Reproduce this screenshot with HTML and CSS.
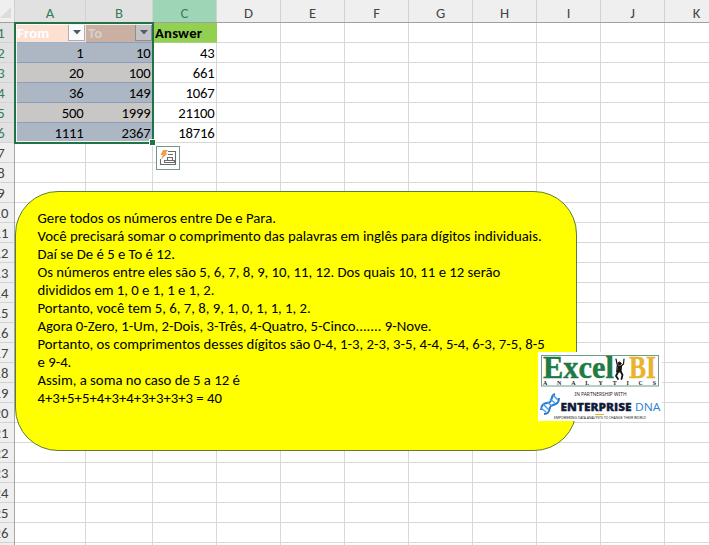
FILE: index.html
```html
<!DOCTYPE html>
<html lang="pt">
<head>
<meta charset="utf-8">
<title>Planilha</title>
<link rel="stylesheet" href="styles.css">
</head>
<body>
<div class="sheet">
  <div class="col-heads">
    <div class="corner"><svg width="15" height="22"><path d="M11 7v11H0z" fill="#dcdcdc"/></svg></div>
    <div class="ch ca sel">A</div><div class="ch cb sel">B</div><div class="ch cur">C</div><div class="ch">D</div><div class="ch">E</div><div class="ch">F</div><div class="ch">G</div><div class="ch">H</div><div class="ch">I</div><div class="ch">J</div><div class="ch">K</div>
  </div>
  <div class="main">
    <div class="row-heads">
      <div class="rh sel">1</div><div class="rh sel">2</div><div class="rh sel">3</div><div class="rh sel">4</div><div class="rh sel">5</div><div class="rh sel">6</div><div class="rh">7</div><div class="rh">8</div><div class="rh">9</div><div class="rh">10</div><div class="rh">11</div><div class="rh">12</div><div class="rh">13</div><div class="rh">14</div><div class="rh">15</div><div class="rh">16</div><div class="rh">17</div><div class="rh">18</div><div class="rh">19</div><div class="rh">20</div><div class="rh">21</div><div class="rh">22</div><div class="rh">23</div><div class="rh">24</div><div class="rh">25</div><div class="rh">26</div><div class="rh"></div>
    </div>
    <div class="cells">
      <div class="data">
        <div class="c head from">From<span class="filter"><svg width="9" height="5"><path d="M0 0h8L4 4.5z" fill="#555b63"/></svg></span></div>
        <div class="c head to">To<span class="filter dim"><svg width="9" height="5"><path d="M0 0h8L4 4.5z" fill="#555b63"/></svg></span></div>
        <div class="c head answer">Answer</div>
        <div class="c blue">1</div><div class="c blue">10</div><div class="c">43</div>
        <div class="c gray">20</div><div class="c gray">100</div><div class="c">661</div>
        <div class="c blue">36</div><div class="c blue">149</div><div class="c">1067</div>
        <div class="c gray">500</div><div class="c gray">1999</div><div class="c">21100</div>
        <div class="c blue">1111</div><div class="c blue">2367</div><div class="c">18716</div>
      </div>
    </div>
  </div>
  <div class="selection"></div>
  <div class="handle"></div>
  <div class="quick">
    <svg width="18" height="18" viewBox="0 0 18 18" fill="none">
      <path d="M9 2.500h7.500v13.500M1.500 10v5.500h15M9 5.500h5M8.500 11V8.500h5V11M5.500 11.500h10v2h-10z" stroke="#6b6b6b" stroke-width="1.100"/>
      <path d="M4 1h5L6.500 4.500H9L1.500 10.500 4 6H1.500z" fill="#f0a04c"/>
    </svg>
  </div>
  <div class="note">
    <p>Gere todos os números entre De e Para.</p>
    <p>Você precisará somar o comprimento das palavras em inglês para dígitos individuais.</p>
    <p>Daí se De é 5 e To é 12.</p>
    <p>Os números entre eles são 5, 6, 7, 8, 9, 10, 11, 12. Dos quais 10, 11 e 12 serão</p>
    <p>divididos em 1, 0 e 1, 1 e 1, 2.</p>
    <p>Portanto, você tem 5, 6, 7, 8, 9, 1, 0, 1, 1, 1, 2.</p>
    <p>Agora 0-Zero, 1-Um, 2-Dois, 3-Três, 4-Quatro, 5-Cinco....... 9-Nove.</p>
    <p>Portanto, os comprimentos desses dígitos são 0-4, 1-3, 2-3, 3-5, 4-4, 5-4, 6-3, 7-5, 8-5</p>
    <p>e 9-4.</p>
    <p>Assim, a soma no caso de 5 a 12 é</p>
    <p>4+3+5+5+4+3+4+3+3+3+3 = 40</p>
  </div>
  <svg class="logo" width="124" height="69" viewBox="0 0 124 69">
    <rect width="124" height="69" fill="#fff"/>
    <rect x="3.500" y="3.500" width="117" height="30.500" fill="none" stroke="#6f9d86"/>
    <g class="brand">
      <text x="5" y="26.300" textLength="71" lengthAdjust="spacingAndGlyphs" fill="#1f7a43" stroke="#1f7a43">Excel</text>
      <text x="91" y="26.300" textLength="27" lengthAdjust="spacingAndGlyphs" fill="#e9b32c" stroke="#e9b32c">BI</text>
    </g>
    <g fill="#151515" stroke="#151515" stroke-linecap="round" stroke-linejoin="round">
      <circle cx="81.500" cy="11.500" r="1.500"/>
      <path d="M78 7l1.500 7 2.500 1 3.500-3 .5-5" fill="none" stroke-width="1.200"/>
      <path d="M79.500 14h4l-.5 6h-4z"/>
      <path d="M80 20l-2 4 2 3M83 20l1.500 3-1 4" fill="none" stroke-width="1.800"/>
    </g>
    <text class="analytics" x="5" y="32.700" textLength="113">ANALYTICS</text>
    <text class="partner" x="36.500" y="43.800" textLength="52" lengthAdjust="spacingAndGlyphs">IN PARTNERSHIP WITH</text>
    <g fill="none" stroke="#2878c8" stroke-width="2">
      <path d="M3 58c0-8 6-6 9-8s0-6 5-8"/>
      <path d="M6 62c8-1 4-6 7-8s8-1 8-8"/>
      <path d="M3 56l5 4M5 52l6 6M9 50l5 4M12 47l5 4M15 43l5 5" stroke="#4d9cf0" stroke-width="1.500"/>
    </g>
    <text class="ent" x="22.500" y="59" textLength="71" lengthAdjust="spacingAndGlyphs">ENTERPRISE</text>
    <text class="dna" x="97" y="59" textLength="25.500" lengthAdjust="spacingAndGlyphs">DNA</text>
    <path d="M57 62.500h9" stroke="#e9b32c"/>
    <text class="tag" x="16" y="67.300" textLength="92" lengthAdjust="spacingAndGlyphs">EMPOWERING DATA ANALYSTS TO CHANGE THEIR WORLD</text>
  </svg>
</div>
</body>
</html>
```
FILE: styles.css
```css
* { box-sizing: border-box; }
body { margin: 0; background: #fff; }
.sheet {
  position: relative;
  width: 709px;
  height: 545px;
  overflow: hidden;
  font-family: Carlito, "Noto Sans", sans-serif;
  font-size: 14.67px;
  color: #000;
}
.col-heads { display: flex; height: 23px; background: #efefef; border-bottom: 1px solid #a0a0a0; }
.corner { flex: none; width: 15px; border-right: 1px solid #cfcfcf; }
.ch {
  flex: none;
  width: 64px;
  padding-top: 4px;
  line-height: 18px;
  text-align: center;
  color: #444;
  border-right: 1px solid #d2d2d2;
}
.ca { width: 71px; }
.cb { width: 67px; }
.ch.sel { background: #e1e1e1; color: #397b5b; }
.ch.cur { background: #9fd5b7; color: #397b5b; }
.main { display: flex; }
.row-heads { flex: none; width: 27px; margin-left: -12px; background: #efefef; border-right: 1px solid #a6a6a6; }
.rh {
  height: 20px;
  line-height: 21px;
  text-align: center;
  color: #444;
  border-bottom: 1px solid #d2d2d2;
}
.rh.sel { background: #e1e1e1; color: #397b5b; }
.cells {
  flex: none;
  width: 694px;
  height: 540px;
  background:
    linear-gradient(#d9d9d9, #d9d9d9) 70px 0 / 1px 100% no-repeat,
    repeating-linear-gradient(to right, transparent 0 63px, #d9d9d9 63px 64px) 138px 0 no-repeat,
    linear-gradient(#d9d9d9, #d9d9d9) 137px 0 / 1px 100% no-repeat,
    repeating-linear-gradient(transparent 0 19px, #d9d9d9 19px 20px);
}
.data { display: grid; grid-template-columns: 71px 67px 64px; grid-auto-rows: 20px; }
.c { padding-right: 2.500px; line-height: 21px; text-align: right; letter-spacing: -.2px; }
.blue, .gray { border-bottom: 1px solid #8a9fbb; }
.blue { background: #acb7c3; }
.gray { background: #c8c7c6; }
.c.head { display: flex; justify-content: space-between; padding: 0 0 0 2px; font-weight: 700; letter-spacing: .2px; }
.from { background: #fce0d2; color: #fff; border-bottom: 1px solid #9db3cf; }
.to { background: #c9b0a3; color: #dccfc8; border-bottom: 1px solid #8a9fbb; }
.answer { background: #92d050; border-bottom: 1px solid #a9cf84; }
.filter { display: flex; align-items: center; justify-content: center; width: 17px; height: 17px; margin: 1px 1px 0 0; padding-left: 1px; background: #fafbfd; border: 1px solid #a9b0b9; }
.dim { background: #c4c4c6; border-color: #888f98; }
.selection { position: absolute; left: 14px; top: 22px; width: 140px; height: 122px; border: 2px solid #217346; }
.selection::after { content: ""; position: absolute; inset: 0; border: 1px solid #fff; border-right: 0; opacity: .85; }
.handle { position: absolute; left: 149px; top: 139px; width: 7px; height: 7px; background: #217346; border: 1px solid #fff; }
.quick { position: absolute; left: 156px; top: 146px; display: flex; align-items: center; justify-content: center; width: 24px; height: 24px; background: #fff; border: 1px solid #6f9a84; }
.note {
  position: absolute;
  left: 15px;
  top: 191px;
  width: 562px;
  height: 260px;
  padding: 18px 0 0 21.500px;
  background: #ff0;
  border: 1px solid #5c7a3c;
  border-radius: 43px;
  font-size: 14.740px;
  line-height: 17.950px;
  white-space: nowrap;
}
.note p { margin: 0; width: max-content; }
.logo { position: absolute; left: 538px; top: 352px; }
.brand { font: 700 31px "Liberation Serif", serif; stroke-width: .4px; }
.analytics { font: 700 6px "Liberation Serif", serif; fill: #222; }
.partner { font: 400 4.500px "Noto Sans", sans-serif; fill: #222; }
.ent { font: 800 11.300px "Open Sans", sans-serif; fill: #101a3a; stroke: #101a3a; stroke-width: .3px; }
.dna { font: 400 11.300px "Open Sans", sans-serif; fill: #2b80cf; }
.tag { font: 400 3.500px "Noto Sans", sans-serif; fill: #222; }
```
